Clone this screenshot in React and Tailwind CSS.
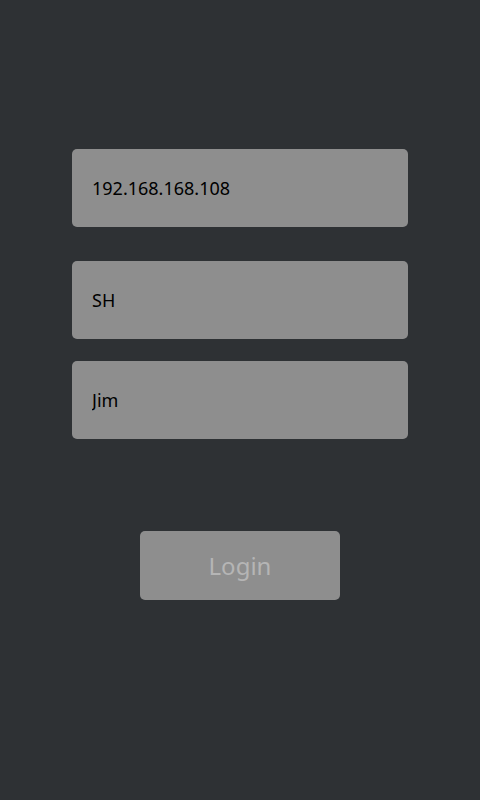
import React, { useState } from 'react';

const fieldClass =
    'w-[336px] h-[78px] rounded-[5px] bg-[#8e8e8e] px-5 text-[18px] text-black outline-none';

const App = () => {
    const [host, setHost] = useState('192.168.168.108');
    const [group, setGroup] = useState('SH');
    const [user, setUser] = useState('Jim');

    return (
        <div
            className="w-[480px] h-[800px] bg-[#2e3134] flex flex-col items-center pt-[149px]"
            style={{ fontFamily: '"Noto Sans", "Open Sans", sans-serif' }}
        >
            <input className={fieldClass} value={host} onChange={(e) => setHost(e.target.value)} />
            <input className={`${fieldClass} mt-[34px]`} value={group} onChange={(e) => setGroup(e.target.value)} />
            <input className={`${fieldClass} mt-[22px]`} value={user} onChange={(e) => setUser(e.target.value)} />

            <button className="mt-[92px] w-[200px] h-[69px] rounded-[5px] bg-[#8e8e8e] text-[24px] text-[#b5b5b5]">
                Login
            </button>
        </div>
    );
};

export default App;
